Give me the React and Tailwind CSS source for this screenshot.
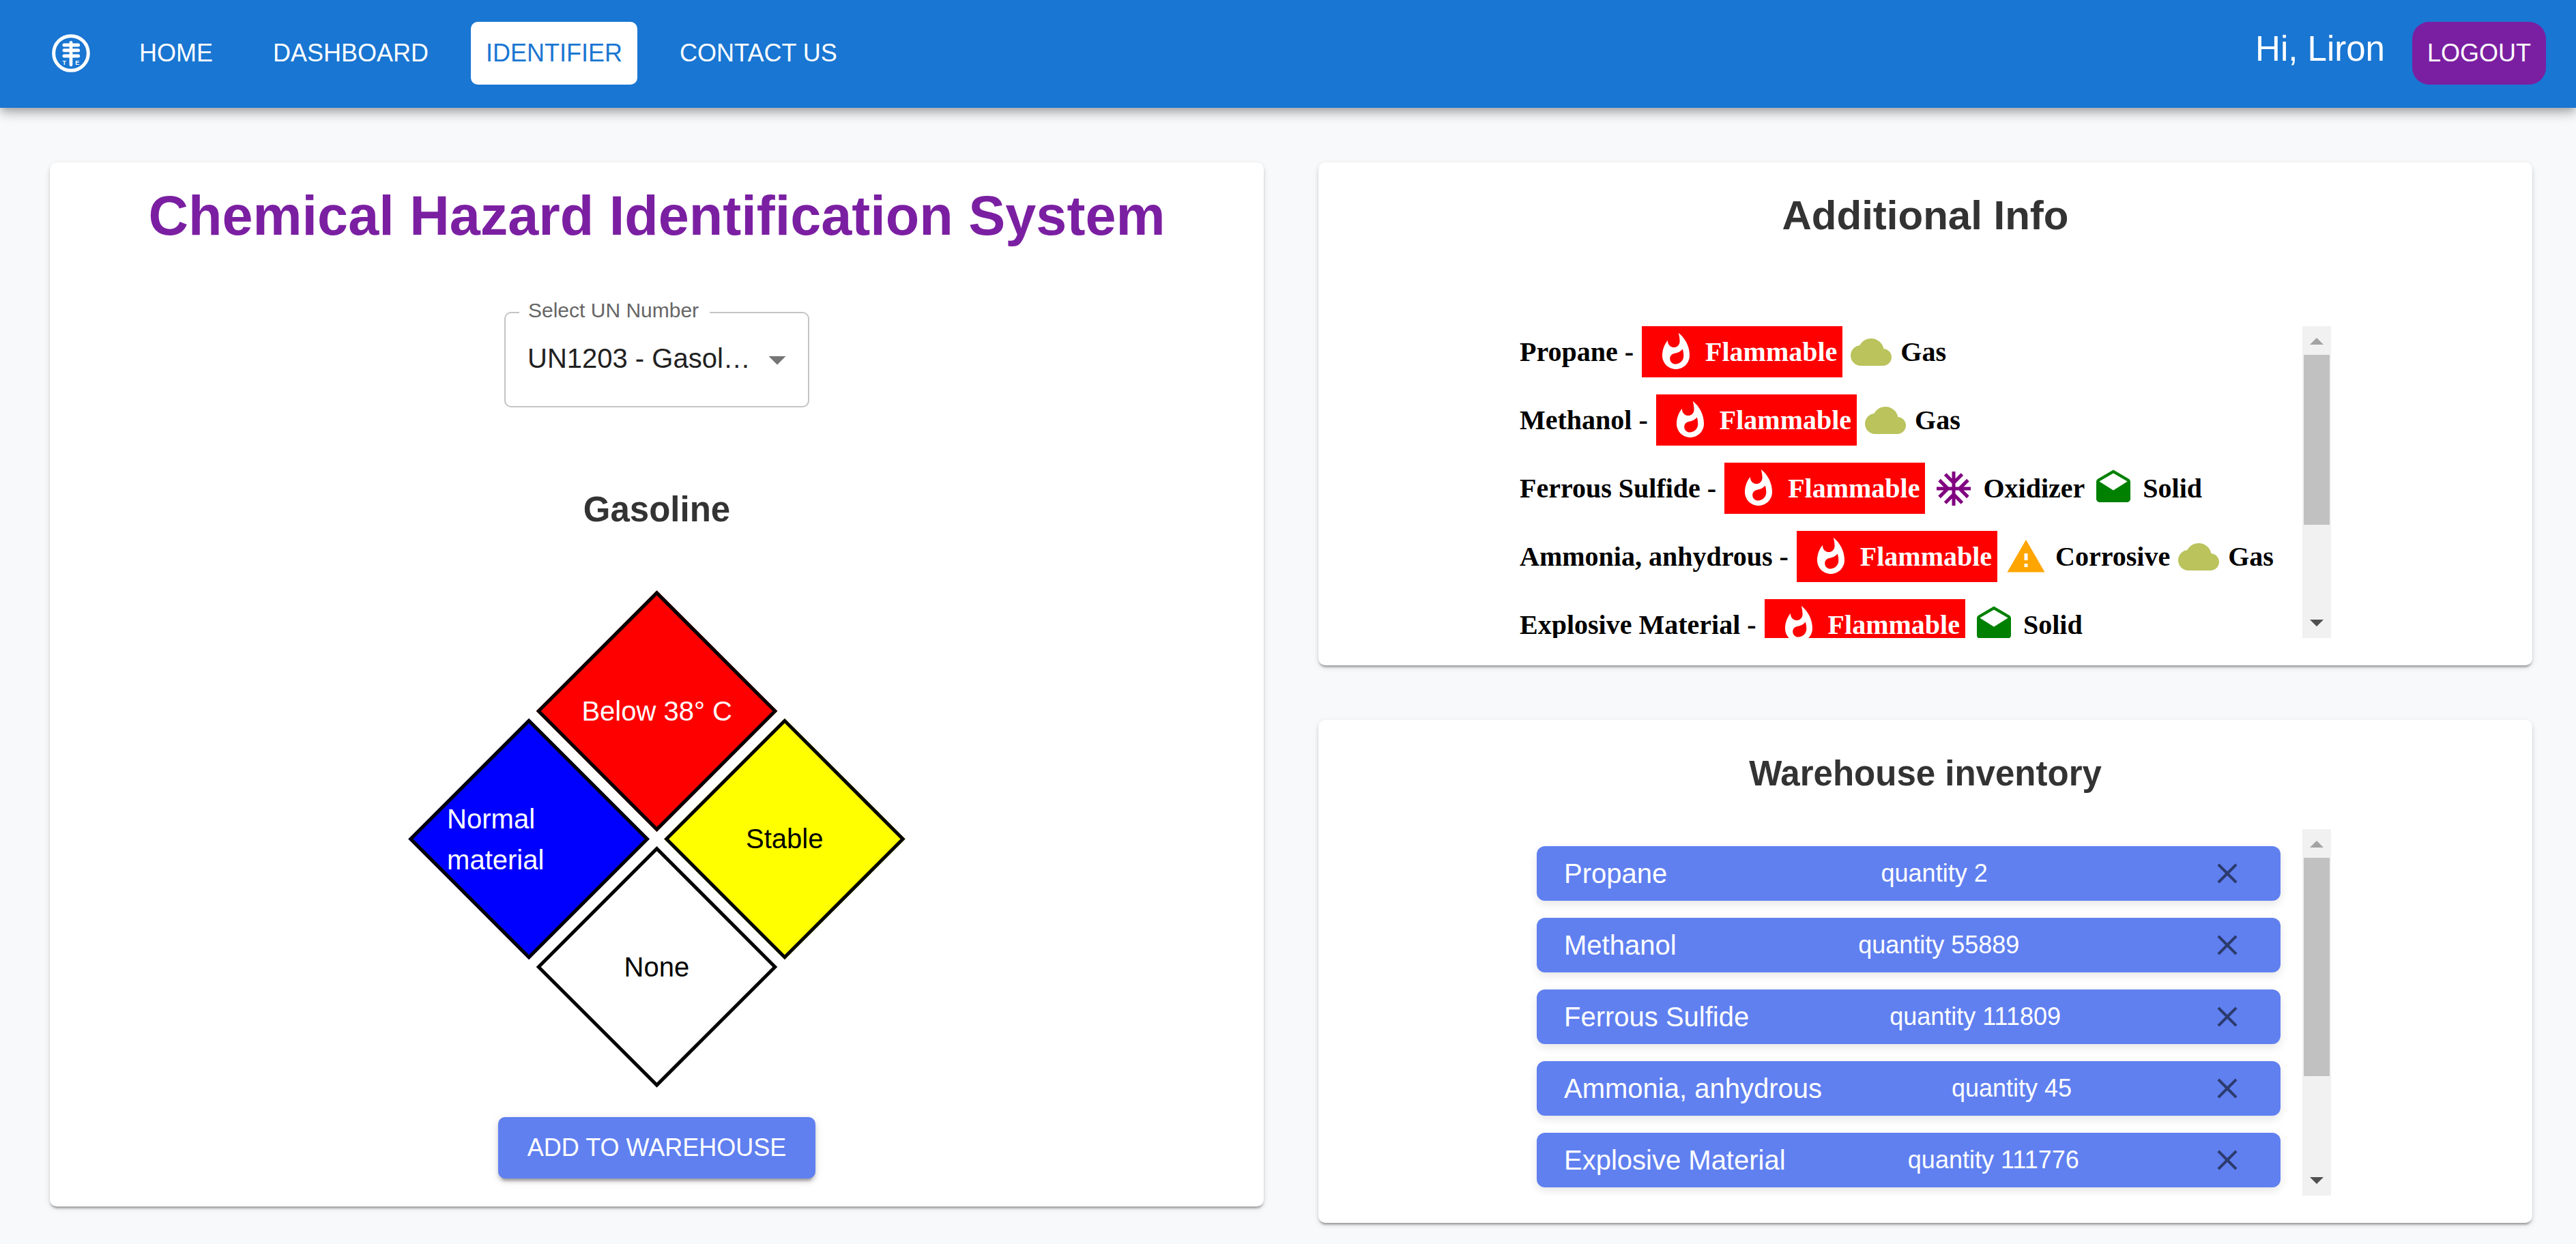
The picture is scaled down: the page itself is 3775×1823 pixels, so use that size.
import React from "react";
import {
  MdWhatshot,
  MdCloud,
  MdAcUnit,
  MdDrafts,
  MdWarning,
  MdClose,
  MdArrowDropDown,
} from "react-icons/md";

const cardClass =
  "flex flex-col items-center rounded-[10px] bg-white shadow-[0_5px_3px_-3px_rgba(0,0,0,0.2),0_3px_3px_0_rgba(0,0,0,0.14),0_3px_8px_0_rgba(0,0,0,0.12)]";

const navItems = [
  { label: "HOME" },
  { label: "DASHBOARD" },
  { label: "IDENTIFIER", active: true },
  { label: "CONTACT US" },
];

const tags = {
  gas: { label: "Gas", Icon: MdCloud, color: "text-[#bac35c]" },
  oxidizer: { label: "Oxidizer", Icon: MdAcUnit, color: "text-[#800080]" },
  solid: { label: "Solid", Icon: MdDrafts, color: "text-[#008000]" },
  corrosive: { label: "Corrosive", Icon: MdWarning, color: "text-[#ffa500]" },
};

const materials = [
  { name: "Propane", quantity: 2, tags: ["gas"] },
  { name: "Methanol", quantity: 55889, tags: ["gas"] },
  { name: "Ferrous Sulfide", quantity: 111809, tags: ["oxidizer", "solid"] },
  { name: "Ammonia, anhydrous", quantity: 45, tags: ["corrosive", "gas"] },
  { name: "Explosive Material", quantity: 111776, tags: ["solid"] },
];

function Logo() {
  return (
    <svg viewBox="0 0 168 168" className="size-14 shrink-0" aria-label="TE" role="img">
      <circle cx="84" cy="84" r="76" fill="none" stroke="#fff" strokeWidth="15" />
      <g stroke="#fff" strokeLinecap="round">
        <path d="M84 37V135" strokeWidth="14" />
        <path d="M54 48H116M54 71H116M54 96H116" strokeWidth="15" />
      </g>
      <g fill="#fff" fontFamily="Liberation Sans, sans-serif" fontWeight="700" fontSize="27" textAnchor="middle">
        <text x="55" y="135">T</text>
        <text x="112" y="135">E</text>
      </g>
    </svg>
  );
}

function Header() {
  return (
    <header className="relative flex items-center justify-between bg-[#1976d2] pt-8 pr-11 pb-[34px] pl-[76px] text-[36px] leading-[62px] text-white shadow-[0_5px_10px_-3px_rgba(0,0,0,0.2),0_10px_13px_0_rgba(0,0,0,0.14),0_3px_25px_0_rgba(0,0,0,0.12)]">
      <nav className="flex items-center gap-10">
        <a href="#home" className="mr-[6px]">
          <Logo />
        </a>
        {navItems.map((item) => (
          <a
            key={item.label}
            href="#"
            className={
              item.active
                ? "min-w-[160px] rounded-[10px] bg-white px-[22px] py-[15px] text-center text-[#1976d2]"
                : "min-w-[160px] rounded-[10px] px-[22px] py-[15px] text-center"
            }
          >
            {item.label}
          </a>
        ))}
      </nav>
      <div className="flex items-center gap-10">
        <span className="pb-3 text-[51px]">Hi, Liron</span>
        <button type="button" className="rounded-[25px] bg-[#7b1fa2] px-[22px] py-[15px]">
          LOGOUT
        </button>
      </div>
    </header>
  );
}

function UnSelect() {
  return (
    <div className="relative mt-[91px] h-[140px] w-[447px] rounded-[10px] border-2 border-[#c4c4c4]">
      <label
        htmlFor="un-number"
        className="absolute -top-[22px] left-5 bg-white pr-4 pl-[13px] text-[30px] leading-9 whitespace-nowrap text-[#666]"
      >
        Select UN Number
      </label>
      <select
        id="un-number"
        className="h-full w-full appearance-none overflow-hidden bg-transparent pr-[78px] pb-1 pl-8 text-[40px] text-ellipsis whitespace-nowrap text-[#212121]"
      >
        <option>UN1203 - Gasoline</option>
      </select>
      <MdArrowDropDown
        aria-hidden="true"
        className="pointer-events-none absolute top-[38px] right-[15px] size-[60px] text-[#757575]"
      />
    </div>
  );
}

function Diamond({ className, children }) {
  return (
    <div className={`flex size-[250px] items-center justify-center border-[5px] border-black ${className}`}>
      <span className="-rotate-45 text-[40px] leading-[60px]">{children}</span>
    </div>
  );
}

function HazardDiamond() {
  return (
    <div className="mt-[88px] flex h-[728px] items-center justify-center">
      <div className="grid rotate-45 grid-cols-2 gap-[15px]">
        <Diamond className="bg-[#ff0000] text-white">Below 38° C</Diamond>
        <Diamond className="bg-[#ffff00] text-black">Stable</Diamond>
        <Diamond className="bg-[#0000ff] text-white">Normal material</Diamond>
        <Diamond className="bg-white text-black">None</Diamond>
      </div>
    </div>
  );
}

function ScrollBar({ thumb }) {
  return (
    <div className="flex w-[42px] shrink-0 flex-col items-center bg-[#f1f1f1]" aria-hidden="true">
      <div className="flex h-[42px] items-center justify-center pt-0.5">
        <svg viewBox="0 0 20 10" className="h-[10px] w-5" fill="#a3a3a3">
          <path d="M10 0L20 10H0Z" />
        </svg>
      </div>
      <div className={`w-[38px] bg-[#c1c1c1] ${thumb}`} />
      <div className="mt-auto flex h-[42px] items-center justify-center pb-0.5">
        <svg viewBox="0 0 20 10" className="h-[10px] w-5" fill="#505050">
          <path d="M0 0H20L10 10Z" />
        </svg>
      </div>
    </div>
  );
}

function AdditionalInfo() {
  return (
    <section className={`${cardClass} pt-[42px] pb-10`}>
      <h2 className="text-[60px] leading-[72px] font-bold text-[#333]">Additional Info</h2>
      <div className="mt-[126px] flex h-[457px] w-full max-w-[1189px]">
        <ul className="flex flex-1 flex-col gap-[25px] overflow-hidden font-['Liberation_Serif',serif] text-[40px] leading-[75px] font-bold text-black">
          {materials.map((m) => (
            <li key={m.name} className="flex shrink-0 items-center gap-3 whitespace-nowrap">
              <span>{m.name} -</span>
              <span className="flex items-center gap-[13px] bg-[#ff0000] pr-2 pl-5 text-white">
                <MdWhatshot className="size-[60px]" />
                Flammable
              </span>
              {m.tags.map((key) => {
                const { label, Icon, color } = tags[key];
                return (
                  <span key={key} className="flex items-center gap-[13px]">
                    <Icon className={`size-[60px] ${color}`} />
                    {label}
                  </span>
                );
              })}
            </li>
          ))}
        </ul>
        <ScrollBar thumb="h-[249px]" />
      </div>
    </section>
  );
}

function Inventory() {
  return (
    <section className={`${cardClass} pt-[49px] pb-10`}>
      <h2 className="text-[51px] leading-[60px] font-bold text-[#333]">Warehouse inventory</h2>
      <div className="mt-[51px] flex h-[537px] w-full max-w-[1189px]">
        <ul className="flex flex-1 flex-col gap-[25px] overflow-hidden pt-[25px] pr-8 pl-[25px] text-white">
          {materials.map((m) => (
            <li
              key={m.name}
              className="flex h-20 shrink-0 items-center justify-between rounded-xl bg-[#6080f0] px-10 shadow-[0_5px_13px_0_rgba(0,0,0,0.1)]"
            >
              <span className="text-[40px]">{m.name}</span>
              <span className="text-[36px]">quantity {m.quantity}</span>
              <button
                type="button"
                aria-label={`Remove ${m.name}`}
                className="flex w-[76px] items-center justify-center text-black/54"
              >
                <MdClose className="size-[50px]" />
              </button>
            </li>
          ))}
        </ul>
        <ScrollBar thumb="h-[320px]" />
      </div>
    </section>
  );
}

export default function App() {
  return (
    <div className="min-h-screen bg-[#f8f9fb] font-['Liberation_Sans',Arial,sans-serif]">
      <Header />
      <main className="grid grid-cols-2 items-start gap-20 pt-20 pr-16 pb-[31px] pl-[73px]">
        <section className={`${cardClass} pt-7 pb-[41px]`}>
          <h1 className="text-[81px] leading-[100px] font-bold text-[#7b1fa2]">
            Chemical Hazard Identification System
          </h1>
          <UnSelect />
          <h2 className="mt-[120px] text-[51px] leading-[60px] font-bold text-[#333]">Gasoline</h2>
          <HazardDiamond />
          <button
            type="button"
            className="mt-11 h-[90px] w-[465px] rounded-[10px] bg-[#6080f0] text-[36px] whitespace-nowrap text-white shadow-[0_8px_3px_-5px_rgba(0,0,0,0.2),0_5px_5px_0_rgba(0,0,0,0.14),0_3px_13px_0_rgba(0,0,0,0.12)]"
          >
            ADD TO WAREHOUSE
          </button>
        </section>
        <div className="flex flex-col gap-20">
          <AdditionalInfo />
          <Inventory />
        </div>
      </main>
    </div>
  );
}
